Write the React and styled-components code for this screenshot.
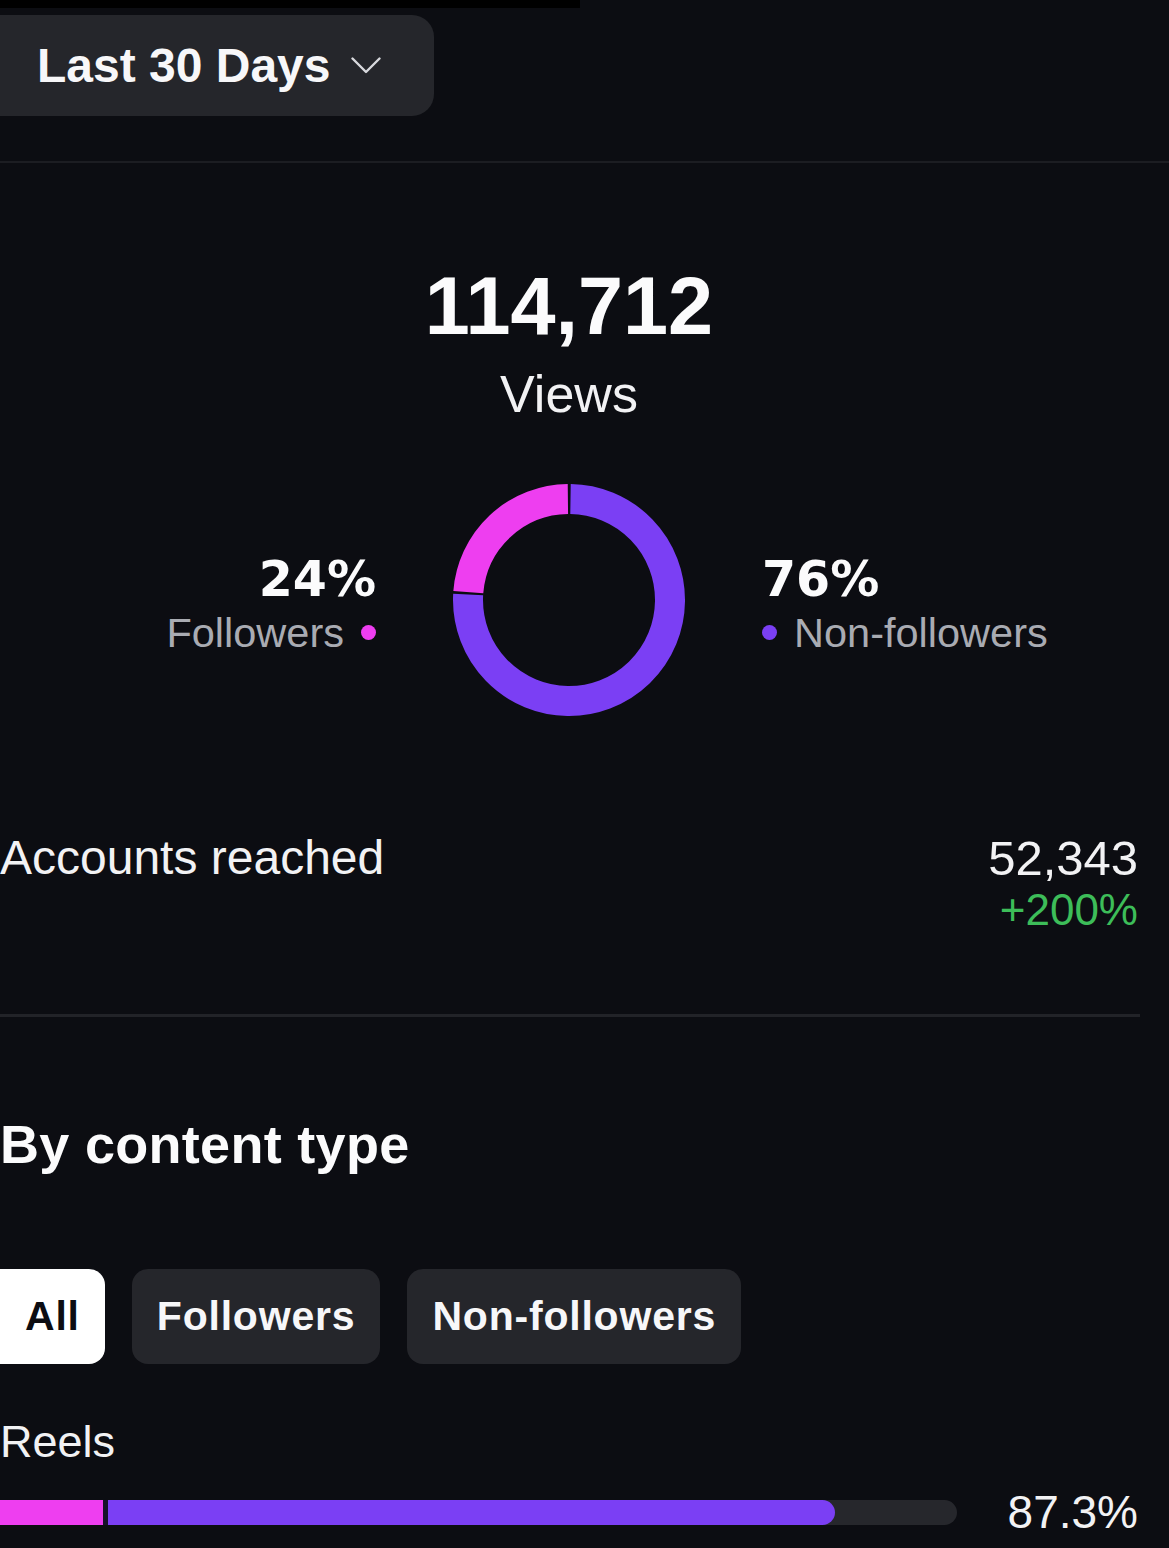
import React from "react";
import styled, { createGlobalStyle } from "styled-components";

const Global = createGlobalStyle`
  html, body { margin: 0; padding: 0; background: #0c0d12; }
  body { font-family: "Liberation Sans", Arial, sans-serif; color: #f5f5f7; }
  * { box-sizing: border-box; }
`;

const Page = styled.div`
  width: 1169px;
  min-height: 1548px;
  background: #0c0d12;
  overflow: hidden;
`;

const TopStrip = styled.div`
  width: 580px;
  height: 8px;
  background: #000;
`;

const Header = styled.div`
  padding-top: 7px;
  height: 153px;
`;

const RangeButton = styled.button`
  display: flex;
  align-items: center;
  gap: 20px;
  width: 434px;
  height: 101px;
  padding: 0 0 0 37px;
  border: none;
  border-radius: 0 22px 22px 0;
  background: #25262b;
  color: #f7f7f9;
  font-family: "Liberation Sans", Arial, sans-serif;
  font-weight: 700;
  font-size: 48px;
  line-height: 1;
`;

const HeaderRule = styled.div`
  height: 2px;
  background: #1c1d22;
`;

const Content = styled.div`
  width: 1138px;
`;

const Hero = styled.div`
  display: flex;
  flex-direction: column;
  align-items: center;
  padding-top: 103px;
`;

const BigNumber = styled.div`
  font-size: 81px;
  font-weight: 700;
  line-height: 1;
  color: #fbfbfc;
`;

const BigLabel = styled.div`
  margin-top: 21px;
  font-size: 52px;
  line-height: 1;
  color: #f2f2f4;
`;

const DonutRow = styled.div`
  display: grid;
  grid-template-columns: 1fr auto 1fr;
  align-items: center;
  column-gap: 77px;
  margin-top: 64px;
`;

const Side = styled.div`
  display: flex;
  flex-direction: column;
  gap: 8px;
  align-items: ${(p) => (p.$right ? "flex-start" : "flex-end")};
  padding-top: 8px;
`;

const Pct = styled.div`
  font-family: "DejaVu Sans", "Liberation Sans", sans-serif;
  font-size: 49px;
  font-weight: 700;
  line-height: 1;
  color: #fbfbfc;
`;

const Legend = styled.div`
  display: flex;
  align-items: center;
  gap: 17px;
  font-size: 41.5px;
  line-height: 1;
  color: #a9abb2;
`;

const Dot = styled.span`
  width: 15px;
  height: 15px;
  border-radius: 50%;
  background: ${(p) => p.$color};
  flex: none;
`;

const StatRow = styled.div`
  display: flex;
  justify-content: space-between;
  align-items: flex-start;
  margin-top: 118px;
`;

const StatLabel = styled.div`
  font-size: 48px;
  line-height: 1;
  color: #f2f2f4;
`;

const StatValues = styled.div`
  display: flex;
  flex-direction: column;
  align-items: flex-end;
  gap: 5px;
`;

const StatValue = styled.div`
  font-size: 49px;
  line-height: 1;
  color: #f2f2f4;
`;

const StatDelta = styled.div`
  font-size: 44px;
  line-height: 1;
  color: #3dbd59;
`;

const Rule = styled.div`
  height: 3px;
  width: 1140px;
  background: #222328;
  margin-top: 82px;
`;

const SectionTitle = styled.div`
  margin-top: 100px;
  font-size: 54px;
  font-weight: 700;
  line-height: 1;
  letter-spacing: 0.3px;
  color: #fbfbfc;
`;

const Chips = styled.div`
  display: flex;
  gap: 27px;
  margin-top: 98px;
`;

const Chip = styled.button`
  height: 95px;
  padding: 0 25px;
  border: none;
  border-radius: ${(p) => (p.$active ? "0 16px 16px 0" : "16px")};
  background: ${(p) => (p.$active ? "#ffffff" : "#25262b")};
  color: ${(p) => (p.$active ? "#0c0d12" : "#f7f7f9")};
  font-family: "Liberation Sans", Arial, sans-serif;
  font-weight: 700;
  font-size: 41px;
  letter-spacing: 0.8px;
  line-height: 1;
`;

const ItemLabel = styled.div`
  margin-top: 55px;
  font-size: 45px;
  line-height: 1;
  color: #f2f2f4;
`;

const BarRow = styled.div`
  display: flex;
  align-items: center;
  margin-top: 25px;
`;

const Track = styled.div`
  flex: 1;
  height: 25px;
  border-radius: 0 13px 13px 0;
  background: #26272c;
  display: flex;
  overflow: hidden;
`;

const SegPink = styled.div`
  height: 100%;
  background: #ee3ef0;
`;

const SegPurple = styled.div`
  height: 100%;
  background: #7b3ff4;
  border-left: 5px solid #17112a;
  border-radius: 0 13px 13px 0;
`;

const BarValue = styled.div`
  width: 181px;
  text-align: right;
  font-size: 46px;
  line-height: 1;
  color: #f2f2f4;
`;

const Chevron = () => (
  <svg width="30" height="17" viewBox="0 0 30 17" fill="none">
    <polyline points="1.5,1.5 15,15 28.5,1.5" stroke="#d8d9dd" strokeWidth="2.4" strokeLinecap="round" strokeLinejoin="round" />
  </svg>
);

const Donut = ({ pink = 0.24 }) => {
  const r = 101;
  const C = 2 * Math.PI * r;
  const gap = 3;
  const purpleLen = C * (1 - pink);
  const pinkLen = C * pink;
  const pinkStartDeg = -90 + 360 * (1 - pink);
  return (
    <svg width="232" height="232" viewBox="0 0 232 232">
      <circle
        cx="116" cy="116" r={r} fill="none" stroke="#7b3ff4" strokeWidth="30"
        strokeDasharray={`${purpleLen - gap} ${C}`}
        transform={`rotate(${-90 + (gap / 2 / C) * 360} 116 116)`}
      />
      <circle
        cx="116" cy="116" r={r} fill="none" stroke="#ee3ef0" strokeWidth="30"
        strokeDasharray={`${pinkLen - gap} ${C}`}
        transform={`rotate(${pinkStartDeg + (gap / 2 / C) * 360} 116 116)`}
      />
    </svg>
  );
};

export default function App() {
  const reels = { pink: 0.1076, total: 0.873 };
  return (
    <Page>
      <Global />
      <TopStrip />
      <Header>
        <RangeButton>
          Last 30 Days
          <Chevron />
        </RangeButton>
      </Header>
      <HeaderRule />
      <Content>
        <Hero>
          <BigNumber>114,712</BigNumber>
          <BigLabel>Views</BigLabel>
        </Hero>
        <DonutRow>
          <Side>
            <Pct>24%</Pct>
            <Legend>
              Followers
              <Dot $color="#ee3ef0" />
            </Legend>
          </Side>
          <Donut pink={0.24} />
          <Side $right>
            <Pct>76%</Pct>
            <Legend>
              <Dot $color="#7b3ff4" />
              Non-followers
            </Legend>
          </Side>
        </DonutRow>
        <StatRow>
          <StatLabel>Accounts reached</StatLabel>
          <StatValues>
            <StatValue>52,343</StatValue>
            <StatDelta>+200%</StatDelta>
          </StatValues>
        </StatRow>
        <Rule />
        <SectionTitle>By content type</SectionTitle>
        <Chips>
          <Chip $active>All</Chip>
          <Chip>Followers</Chip>
          <Chip>Non-followers</Chip>
        </Chips>
        <ItemLabel>Reels</ItemLabel>
        <BarRow>
          <Track>
            <SegPink style={{ width: `${reels.pink * 100}%` }} />
            <SegPurple style={{ width: `${(reels.total - reels.pink) * 100}%` }} />
          </Track>
          <BarValue>87.3%</BarValue>
        </BarRow>
      </Content>
    </Page>
  );
}
